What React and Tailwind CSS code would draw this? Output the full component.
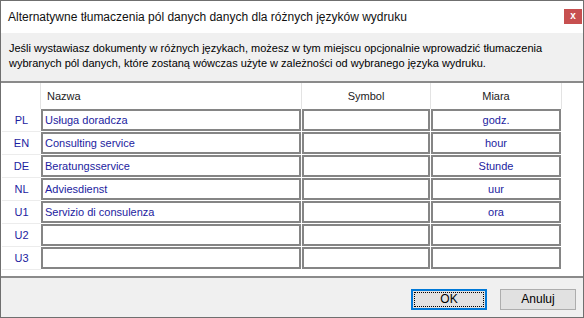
import React from 'react';

const rows = [
  { code: 'PL', name: 'Usługa doradcza', symbol: '', unit: 'godz.' },
  { code: 'EN', name: 'Consulting service', symbol: '', unit: 'hour' },
  { code: 'DE', name: 'Beratungsservice', symbol: '', unit: 'Stunde' },
  { code: 'NL', name: 'Adviesdienst', symbol: '', unit: 'uur' },
  { code: 'U1', name: 'Servizio di consulenza', symbol: '', unit: 'ora' },
  { code: 'U2', name: '', symbol: '', unit: '' },
  { code: 'U3', name: '', symbol: '', unit: '' },
];

const App = () => {
  return (
    <div className="w-[584px] h-[318px] bg-white border border-[#6f6f6f] flex flex-col font-['Liberation_Sans',Arial,sans-serif] text-[11px] text-black overflow-hidden">
      {/* Title bar */}
      <div className="h-[32px] shrink-0 flex items-center justify-between pl-[7px] pr-[1px]">
        <span className="text-[12px] text-[#111]">
          Alternatywne tłumaczenia pól danych danych dla różnych języków wydruku
        </span>
        <button className="w-[18px] h-[15px] mb-[2px] bg-[#c75050] text-white text-[10px] font-bold leading-none flex items-center justify-center">
          x
        </button>
      </div>

      {/* Info */}
      <div className="h-[50px] shrink-0 bg-[#f0f0f0] border-b-2 border-[#8a8a8a] px-[8px] pt-[8px] leading-[15px] whitespace-nowrap">
        Jeśli wystawiasz dokumenty w różnych językach, możesz w tym miejscu opcjonalnie wprowadzić tłumaczenia
        <br />
        wybranych pól danych, które zostaną wówczas użyte w zależności od wybranego języka wydruku.
      </div>

      {/* Table */}
      <div className="flex-1 bg-white border-b-2 border-[#8a8a8a]">
        <div className="h-[26px] flex text-[#222]">
          <div className="w-[40px] border-r border-[#e3e3e3]" />
          <div className="w-[261px] border-r border-[#e3e3e3] flex items-center pl-[6px]">Nazwa</div>
          <div className="w-[129px] border-r border-[#e3e3e3] flex items-center justify-center">Symbol</div>
          <div className="w-[131px] border-r border-[#e3e3e3] flex items-center justify-center">Miara</div>
        </div>
        {rows.map((r) => (
          <div key={r.code} className="h-[23px] flex">
            <div className="w-[39px] ml-[1px] border-b border-[#ececec] flex items-center justify-center text-[#1c1ca0]">
              {r.code}
            </div>
            <div className="w-[260px] h-[22px] border-2 border-[#858585] flex items-center pl-[2px] text-[#1c1ca0]">
              {r.name}
            </div>
            <div className="w-[128px] h-[22px] ml-[1px] border-2 border-[#858585]" />
            <div className="w-[130px] h-[22px] ml-[1px] border-2 border-[#858585] flex items-center justify-center text-[#1c1ca0]">
              {r.unit}
            </div>
          </div>
        ))}
      </div>

      {/* Footer */}
      <div className="h-[39px] shrink-0 bg-[#f0f0f0] flex items-center justify-end gap-[13px] pr-[7px] pt-[3px]">
        <button className="w-[76px] h-[21px] bg-[#e1e1e1] border-2 border-[#0078d7] p-[1px]">
          <div className="w-full h-full border border-dotted border-black flex items-center justify-center text-[12px]">OK</div>
        </button>
        <button className="w-[76px] h-[21px] bg-[#e1e1e1] border border-[#adadad] flex items-center justify-center text-[12px]">
          Anuluj
        </button>
      </div>
    </div>
  );
};

export default App;
